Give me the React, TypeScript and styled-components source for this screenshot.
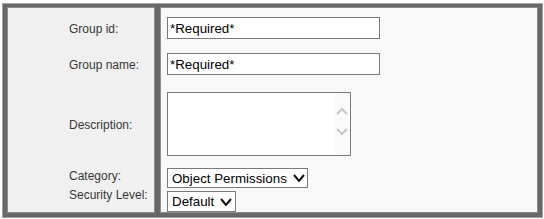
import React from "react";
import styled, { createGlobalStyle } from "styled-components";

const Global = createGlobalStyle`
  html, body { margin: 0; padding: 0; background: #ffffff; }
  body { font-family: "Liberation Sans", Arial, sans-serif; }
  * { box-sizing: border-box; }
`;

const Frame = styled.div`
  margin: 3px 1px 0 2px;
  display: flex;
  gap: 5px;
  padding: 3px 4px 4px 4px;
  background: #686868;
  border: 1px solid #a4a4a4;
  height: 215px;
`;

const Panel = styled.div<{ $width: number; $bg: string }>`
  width: ${(p) => p.$width}px;
  flex: none;
  height: 206px;
  background: ${(p) => p.$bg};
  border: 1px solid #8e8e8e;
  display: flex;
  flex-direction: column;
  align-items: flex-start;
`;

const LabelPanel = styled(Panel)`
  padding: 13px 0 0 61px;
`;

const FieldPanel = styled(Panel)`
  padding: 9px 0 0 6px;
`;

const Label = styled.div<{ $top: number }>`
  margin-top: ${(p) => p.$top}px;
  font-size: 12px;
  line-height: 16px;
  color: #383838;
  white-space: nowrap;
`;

const TextInput = styled.input<{ $top: number }>`
  margin-top: ${(p) => p.$top}px;
  width: 213px;
  height: 22px;
  border: 1px solid #7a7a7a;
  background: #ffffff;
  padding: 0 2px;
  font-family: "Liberation Sans", Arial, sans-serif;
  font-size: 13.33px;
  color: #000;
  outline: none;
`;

const AreaBox = styled.div<{ $top: number }>`
  margin-top: ${(p) => p.$top}px;
  width: 184px;
  height: 64px;
  border: 1px solid #7a7a7a;
  background: #ffffff;
  display: flex;
`;

const Area = styled.textarea`
  flex: 1;
  border: none;
  resize: none;
  outline: none;
  background: transparent;
  font-family: "Liberation Sans", Arial, sans-serif;
  font-size: 13.33px;
  padding: 2px;
`;

const ScrollStrip = styled.div`
  width: 16px;
  background: #fafafa;
  display: flex;
  flex-direction: column;
  align-items: center;
  padding-top: 15px;
  gap: 13px;
`;

const SelectBox = styled.div<{ $top: number; $width: number; $height: number }>`
  margin-top: ${(p) => p.$top}px;
  width: ${(p) => p.$width}px;
  height: ${(p) => p.$height}px;
  border: 1px solid #7a7a7a;
  background: #ffffff;
  display: flex;
  align-items: center;
  padding: 0 2px 0 4px;
  gap: 6px;
  font-size: 13.33px;
  color: #000;
  white-space: nowrap;
`;

const Chevron = ({ up, color, w = 11, h = 7, sw = 2 }: { up?: boolean; color: string; w?: number; h?: number; sw?: number }) => (
  <svg width={w} height={h} viewBox={`0 0 ${w} ${h}`} style={{ display: "block" }}>
    <path
      d={up ? `M1 ${h - 1} L${w / 2} 1 L${w - 1} ${h - 1}` : `M1 1 L${w / 2} ${h - 1} L${w - 1} 1`}
      fill="none"
      stroke={color}
      strokeWidth={sw}
    />
  </svg>
);

export default function App() {
  return (
    <>
      <Global />
      <Frame>
        <LabelPanel $width={148} $bg="#f0f0f0">
          <Label $top={0}>Group id:</Label>
          <Label $top={20}>Group name:</Label>
          <Label $top={44}>Description:</Label>
          <Label $top={35}>Category:</Label>
          <Label $top={3}>Security Level:</Label>
        </LabelPanel>
        <FieldPanel $width={378} $bg="#f8f8f8">
          <TextInput $top={0} defaultValue="*Required*" />
          <TextInput $top={14} defaultValue="*Required*" />
          <AreaBox $top={17}>
            <Area />
            <ScrollStrip>
              <Chevron up color="#c6c6c6" w={12} h={7} />
              <Chevron color="#c6c6c6" w={12} h={7} />
            </ScrollStrip>
          </AreaBox>
          <SelectBox $top={12} $width={141} $height={20}>
            <span>Object Permissions</span>
            <Chevron color="#111" w={12} h={8} />
          </SelectBox>
          <SelectBox $top={3} $width={69} $height={21}>
            <span>Default</span>
            <Chevron color="#111" w={12} h={8} />
          </SelectBox>
        </FieldPanel>
      </Frame>
    </>
  );
}
